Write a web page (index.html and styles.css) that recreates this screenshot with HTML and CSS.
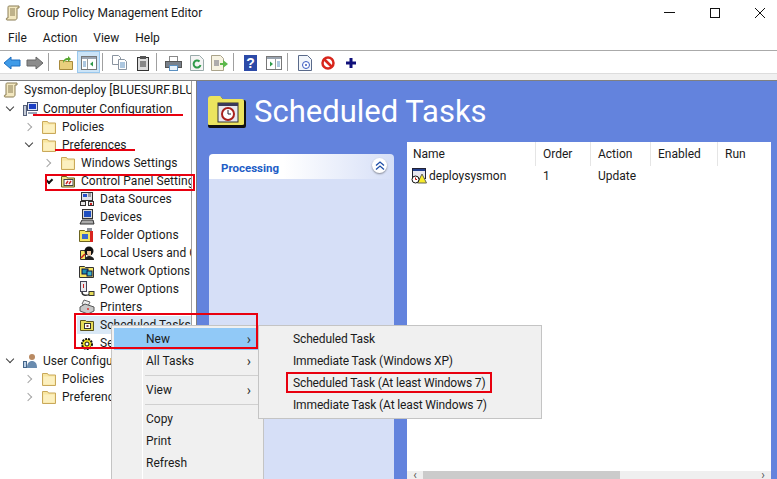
FILE: index.html
```html
<!DOCTYPE html>
<html lang="en">
<head>
    <meta charset="UTF-8">
    <meta name="viewport" content="width=device-width, initial-scale=1.0">
    <title>Group Policy Management Editor</title>
    <link rel="stylesheet" href="styles.css">
</head>
<body>

    <!-- Shared icons -->
    <svg class="icon-defs" width="0" height="0">
        <defs>
            <symbol id="i-scroll" viewBox="0 0 16 16">
                <path d="M4 1h10v2h-2v10c0 1-1 2-2 2H2c-1 0-1-2 0-2h1V3c0-1 0-2 1-2z" fill="#f3e8c0" stroke="#8a7d55"/>
                <path d="M5 4h5M5 6h5M5 8h5M5 10h5" stroke="#8a7d55"/>
            </symbol>
            <symbol id="i-folder" viewBox="0 0 16 16">
                <path d="M1.500 2.500h5l1 1.500h7v10.500h-13z" fill="#f8e6a0" stroke="#c9a85a"/>
                <path d="M2.500 5.500h11v8h-11z" fill="#fcf0c0"/>
            </symbol>
            <symbol id="i-computer" viewBox="0 0 16 16">
                <rect x="5.500" y="1.500" width="10" height="8" fill="#dfe6f5" stroke="#44506e"/>
                <rect x="7" y="3" width="7" height="5" fill="#1c3fc4"/>
                <rect x="1.500" y="4.500" width="3" height="10" fill="#c5cbd6" stroke="#55607a"/>
                <path d="M6 11h9v2H6z" fill="#9aa5b8"/>
            </symbol>
            <symbol id="i-users" viewBox="0 0 16 16">
                <circle cx="10" cy="4" r="3" fill="#b98a62"/>
                <path d="M5 15c0-5 2-7 5-7s5 2 5 7z" fill="#6a8caf"/>
                <rect x="1.500" y="8.500" width="3" height="6" fill="#bcd0e6" stroke="#44668a"/>
            </symbol>
            <symbol id="i-control" viewBox="0 0 16 16">
                <path d="M1.500 3.500h5l1 1.500h7v9h-13z" fill="#f0e68c" stroke="#6b6320"/>
                <rect x="4" y="6.500" width="9" height="6" fill="#fff" stroke="#444"/>
                <path d="M6 11l2-3M9 11l2-3" stroke="#c22" stroke-width="1.500"/>
            </symbol>
            <symbol id="i-data" viewBox="0 0 16 16">
                <rect x="2.500" y="1.500" width="11" height="8" fill="#dfe3ea" stroke="#333"/>
                <rect x="4" y="3" width="4" height="3" fill="#2650c8"/>
                <path d="M9 3h3M9 5h3" stroke="#555"/>
                <rect x="1.500" y="10.500" width="5" height="4" fill="#e8e8e8" stroke="#333"/>
                <rect x="9.500" y="10.500" width="5" height="4" fill="#e8e8e8" stroke="#333"/>
                <rect x="11" y="12" width="2" height="2" fill="#c22"/>
            </symbol>
            <symbol id="i-device" viewBox="0 0 16 16">
                <rect x="3.500" y="0.500" width="10" height="9" fill="#d8d8d8" stroke="#333"/>
                <rect x="5" y="2" width="7" height="6" fill="#1f4fc0"/>
                <path d="M1 15l2-4h11l1 4z" fill="#aaa" stroke="#333"/>
            </symbol>
            <symbol id="i-folderopt" viewBox="0 0 16 16">
                <path d="M0.500 3.500h5l1 1h7v10h-13z" fill="#f5e663" stroke="#6b6320"/>
                <rect x="3" y="7" width="6" height="5" fill="#3a6ad0"/>
                <path d="M8 1l5 0 0 3-5 0z" fill="#8a8f99"/>
                <rect x="11" y="4" width="3" height="11" fill="#d8251f"/>
            </symbol>
            <symbol id="i-local" viewBox="0 0 16 16">
                <path d="M1.500 5.500h5v9h-5z" fill="#f5e663" stroke="#333"/>
                <circle cx="10" cy="6" r="4.500" fill="#111"/>
                <path d="M8 6h4v4l-2 1-2-2z" fill="#f0c8a0"/>
                <path d="M6 15c0-3 2-4 4-4s5 1 5 4z" fill="#222"/>
                <path d="M2 13l4-4" stroke="#c22" stroke-width="1.500"/>
            </symbol>
            <symbol id="i-network" viewBox="0 0 16 16">
                <path d="M0.500 3.500h5l1 1h8v10h-14z" fill="#f5e663" stroke="#333"/>
                <rect x="3" y="6" width="6" height="5" fill="#1f8fb0" stroke="#114"/>
                <rect x="8" y="8" width="5" height="5" fill="#39b6c8" stroke="#114"/>
            </symbol>
            <symbol id="i-power" viewBox="0 0 16 16">
                <rect x="1.500" y="0.500" width="6" height="10" fill="#e8e8ec" stroke="#445"/>
                <path d="M4.500 3v4" stroke="#c22"/>
                <path d="M3 11c0 4 5 4 8 2" fill="none" stroke="#333" stroke-width="1.500"/>
                <rect x="10" y="10.500" width="5" height="4" fill="#e6dc5a" stroke="#333"/>
            </symbol>
            <symbol id="i-printer" viewBox="0 0 16 16">
                <path d="M5 1l6 2-2 4-6-2z" fill="#eee" stroke="#666"/>
                <path d="M1 8l5-3 9 3v4l-6 3-8-3z" fill="#c8c8c8" stroke="#555"/>
                <circle cx="9" cy="10" r="1" fill="#d33"/>
            </symbol>
            <symbol id="i-sched" viewBox="0 0 16 16">
                <path d="M1.500 3.500h5l1 1h7v9h-13z" fill="#e6dc5a" stroke="#5a5420"/>
                <rect x="5.500" y="6.500" width="6" height="5" fill="#fff" stroke="#333"/>
                <rect x="7.500" y="8" width="2" height="2" fill="#844"/>
            </symbol>
            <symbol id="i-gear" viewBox="0 0 16 16">
                <circle cx="8" cy="9" r="5" fill="#f0e020" stroke="#111" stroke-width="2" stroke-dasharray="2 1"/>
                <circle cx="8" cy="9" r="2" fill="#fff" stroke="#111"/>
            </symbol>
            <symbol id="i-task" viewBox="0 0 16 16">
                <rect x="1.500" y="0.500" width="13" height="10" fill="#e8e8f0" stroke="#223"/>
                <rect x="2" y="1" width="12" height="2" fill="#24408e"/>
                <path d="M11 6l4.500 9h-9z" fill="#f8ec2c" stroke="#665"/>
                <circle cx="4.500" cy="11.500" r="3.500" fill="#fff" stroke="#111"/>
                <path d="M4.500 9.500v2h1.500" fill="none" stroke="#b11"/>
            </symbol>
        </defs>
    </svg>

    <div class="window">
        <!-- Title bar -->
        <div class="title-bar">
            <svg class="ico"><use href="#i-scroll"/></svg>
            <span class="title-text">Group Policy Management Editor</span>
            <div class="win-controls">
                <span class="win-btn"><svg width="12" height="12"><path d="M0 5.500h11" stroke="#111"/></svg></span>
                <span class="win-btn"><svg width="12" height="12"><rect x="1.500" y="1.500" width="9" height="9" fill="none" stroke="#111"/></svg></span>
                <span class="win-btn"><svg width="12" height="12"><path d="M1 1l10 10M11 1L1 11" stroke="#111"/></svg></span>
            </div>
        </div>

        <!-- Menu bar -->
        <div class="menu-bar">
            <span>File</span>
            <span>Action</span>
            <span>View</span>
            <span>Help</span>
        </div>

        <!-- Toolbar -->
        <div class="toolbar">
            <span class="tool"><svg width="18" height="16"><path d="M1 8l7-6v3h9v6H8v3z" fill="#3f9be8" stroke="#1f6fc0"/></svg></span>
            <span class="tool"><svg width="18" height="16"><path d="M17 8l-7-6v3H1v6h9v3z" fill="#8c8c8c" stroke="#666"/></svg></span>
            <span class="tool-sep"></span>
            <span class="tool"><svg width="16" height="16"><path d="M1.500 5.500h5l1 1h7v8h-13z" fill="#e9cf7d" stroke="#a88a3c"/><path d="M5 8c0-3 2-5 5-5V1l3 3-3 3V5C8 5 6 6 5 8z" fill="#58a832"/></svg></span>
            <span class="tool tool-active"><svg width="16" height="14"><rect x="0.500" y="0.500" width="15" height="13" fill="#fff" stroke="#777"/><path d="M1 1h14v2H1z" fill="#9aa4b0"/><path d="M6.500 3v10" stroke="#999"/><path d="M2 6h3M2 8h3M2 10h3" stroke="#5a8fc0"/><path d="M12 5.500v5L9 8z" fill="#2f9a4a"/></svg></span>
            <span class="tool-sep"></span>
            <span class="tool"><svg width="17" height="17"><path d="M1.500 1.500h6l2 2v7h-8z" fill="#fff" stroke="#8a94a0"/><path d="M7.500 5.500h6l2 2v8h-8z" fill="#fff" stroke="#8a94a0"/><path d="M9 9h5M9 11h5M9 13h5" stroke="#5a8fc0"/></svg></span>
            <span class="tool"><svg width="14" height="16"><rect x="1.500" y="2.500" width="11" height="13" fill="#ddd" stroke="#333"/><rect x="4" y="1" width="6" height="3" fill="#555"/><path d="M4 7h6M4 9h6M4 11h6" stroke="#333"/></svg></span>
            <span class="tool-sep"></span>
            <span class="tool"><svg width="17" height="16"><rect x="4.500" y="1.500" width="8" height="5" fill="#fff" stroke="#888"/><rect x="0.500" y="6.500" width="16" height="6" fill="#78808a" stroke="#555"/><rect x="4.500" y="10.500" width="8" height="5" fill="#e8f2fb" stroke="#5a8fc0"/></svg></span>
            <span class="tool"><svg width="14" height="16"><path d="M0.500 0.500h9l4 4v11H0.500z" fill="#f4f4f4" stroke="#9aa"/><path d="M10.500 10a3.500 3.500 0 1 1-1-3.500" fill="none" stroke="#2f9a4a" stroke-width="2"/></svg></span>
            <span class="tool"><svg width="17" height="16"><path d="M0.500 0.500h9l3 3v12h-12z" fill="#f7f3e2" stroke="#aaa38a"/><path d="M3 6h5M3 8h5M3 10h5" stroke="#667"/><path d="M9 8h3V5l5 4-5 4v-3H9z" fill="#5cb84a"/></svg></span>
            <span class="tool-sep"></span>
            <span class="tool"><svg width="13" height="16"><rect width="13" height="16" fill="#2c4aa8"/><text x="6.500" y="13" text-anchor="middle" font-family="Liberation Sans" font-size="14" font-weight="bold" fill="#fff">?</text></svg></span>
            <span class="tool"><svg width="16" height="14"><rect x="0.500" y="0.500" width="15" height="13" fill="#fff" stroke="#777"/><path d="M1 1h14v2H1z" fill="#9aa4b0"/><path d="M9.500 3v10" stroke="#999"/><path d="M11 6h3M11 8h3M11 10h3" stroke="#5a8fc0"/><path d="M4 5.500v5L7 8z" fill="#2f9a4a"/></svg></span>
            <span class="tool-sep"></span>
            <span class="tool"><svg width="14" height="16"><path d="M0.500 0.500h9l4 4v11H0.500z" fill="#f2f6fb" stroke="#5a6a8a"/><circle cx="8" cy="10" r="3.500" fill="#fff" stroke="#3a5ac0"/><circle cx="8" cy="10" r="1" fill="#3a5ac0"/></svg></span>
            <span class="tool"><svg width="14" height="14"><circle cx="7" cy="7" r="5.500" fill="#fff" stroke="#d8261c" stroke-width="2.500"/><path d="M3 3l8 8" stroke="#d8261c" stroke-width="2.500"/></svg></span>
            <span class="tool"><svg width="10" height="10"><path d="M3.500 0h3v3.500H10v3H6.500V10h-3V6.500H0v-3h3.500z" fill="#10107a"/></svg></span>
        </div>
        <div class="toolbar-band"></div>

        <!-- Main area -->
        <div class="main">
            <div class="tree">
                <div class="tree-row root"><svg class="ico"><use href="#i-scroll"/></svg><span>Sysmon-deploy [BLUESURF.BLUESURF.LOCAL] Policy</span></div>
                <div class="tree-row lvl-0"><span class="twist open"></span><svg class="ico"><use href="#i-computer"/></svg><span>Computer Configuration</span></div>
                <div class="tree-row lvl-1"><span class="twist"></span><svg class="ico"><use href="#i-folder"/></svg><span>Policies</span></div>
                <div class="tree-row lvl-1"><span class="twist open"></span><svg class="ico"><use href="#i-folder"/></svg><span>Preferences</span></div>
                <div class="tree-row lvl-2"><span class="twist"></span><svg class="ico"><use href="#i-folder"/></svg><span>Windows Settings</span></div>
                <div class="tree-row lvl-2"><span class="twist open dark"></span><svg class="ico"><use href="#i-control"/></svg><span>Control Panel Settings</span></div>
                <div class="tree-row lvl-3"><span class="twist none"></span><svg class="ico"><use href="#i-data"/></svg><span>Data Sources</span></div>
                <div class="tree-row lvl-3"><span class="twist none"></span><svg class="ico"><use href="#i-device"/></svg><span>Devices</span></div>
                <div class="tree-row lvl-3"><span class="twist none"></span><svg class="ico"><use href="#i-folderopt"/></svg><span>Folder Options</span></div>
                <div class="tree-row lvl-3"><span class="twist none"></span><svg class="ico"><use href="#i-local"/></svg><span>Local Users and Groups</span></div>
                <div class="tree-row lvl-3"><span class="twist none"></span><svg class="ico"><use href="#i-network"/></svg><span>Network Options</span></div>
                <div class="tree-row lvl-3"><span class="twist none"></span><svg class="ico"><use href="#i-power"/></svg><span>Power Options</span></div>
                <div class="tree-row lvl-3"><span class="twist none"></span><svg class="ico"><use href="#i-printer"/></svg><span>Printers</span></div>
                <div class="tree-row lvl-3 selected"><span class="twist none"></span><svg class="ico"><use href="#i-sched"/></svg><span>Scheduled Tasks</span></div>
                <div class="tree-row lvl-3"><span class="twist none"></span><svg class="ico"><use href="#i-gear"/></svg><span>Services</span></div>
                <div class="tree-row lvl-0"><span class="twist open"></span><svg class="ico"><use href="#i-users"/></svg><span>User Configuration</span></div>
                <div class="tree-row lvl-1"><span class="twist"></span><svg class="ico"><use href="#i-folder"/></svg><span>Policies</span></div>
                <div class="tree-row lvl-1"><span class="twist"></span><svg class="ico"><use href="#i-folder"/></svg><span>Preferences</span></div>
            </div>

            <div class="splitter"></div>

            <div class="content">
                <div class="content-head">
                    <svg class="head-icon" width="40" height="34" viewBox="0 0 40 34">
                        <path d="M2 5q0-3 3-3h9l3 3h20q2 0 2 2v24q0 2-2 2H3q-2 0-2-2z" fill="#111"/>
                        <path d="M1 4q0-3 3-3h9l3 3h19q2 0 2 2v23q0 1-2 1H2q-1 0-1-1z" fill="#ece45f"/>
                        <rect x="11" y="8" width="20" height="19" fill="#e8e8f0" stroke="#333"/>
                        <rect x="11" y="8" width="20" height="3" fill="#3a3a5a"/>
                        <circle cx="21" cy="19" r="6" fill="#fff" stroke="#a8201c" stroke-width="2"/>
                        <path d="M21 15v4h3" fill="none" stroke="#223"/>
                    </svg>
                    <h1>Scheduled Tasks</h1>
                </div>
                <div class="content-body">
                    <div class="task-pane">
                        <div class="task-head">
                            <span>Processing</span>
                            <span class="collapse"><svg width="10" height="10"><path d="M1 4.500l4-3.500 4 3.500M1 8.500l4-3.500 4 3.500" fill="none" stroke="#1f4fa8" stroke-width="1.300"/></svg></span>
                        </div>
                        <div class="task-body"></div>
                    </div>
                    <div class="list">
                        <div class="list-head">
                            <span class="col-name">Name</span>
                            <span class="col-order">Order</span>
                            <span class="col-action">Action</span>
                            <span class="col-enabled">Enabled</span>
                            <span class="col-run">Run</span>
                        </div>
                        <div class="list-row">
                            <span class="col-name name-cell"><svg class="ico"><use href="#i-task"/></svg>deploysysmon</span>
                            <span class="col-order">1</span>
                            <span class="col-action">Update</span>
                        </div>
                        <div class="list-scroll">
                            <span class="scroll-arrow">&#8249;</span>
                            <span class="scroll-thumb"></span>
                            <span class="scroll-arrow right">&#8250;</span>
                        </div>
                    </div>
                </div>
            </div>
        </div>
    </div>

    <!-- Context menu -->
    <div class="ctx-menu">
        <div class="ctx-item hot"><span>New</span><span class="arrow">&#8250;</span></div>
        <div class="ctx-item"><span>All Tasks</span><span class="arrow">&#8250;</span></div>
        <div class="ctx-sep"></div>
        <div class="ctx-item"><span>View</span><span class="arrow">&#8250;</span></div>
        <div class="ctx-sep"></div>
        <div class="ctx-item"><span>Copy</span></div>
        <div class="ctx-item"><span>Print</span></div>
        <div class="ctx-item"><span>Refresh</span></div>
    </div>

    <!-- Submenu -->
    <div class="sub-menu">
        <div class="ctx-item"><span>Scheduled Task</span></div>
        <div class="ctx-item"><span>Immediate Task (Windows XP)</span></div>
        <div class="ctx-item"><span>Scheduled Task (At least Windows 7)</span></div>
        <div class="ctx-item"><span>Immediate Task (At least Windows 7)</span></div>
    </div>

    <!-- Red annotations drawn on top of the screenshot -->
    <div class="mark-line mark-computer"></div>
    <div class="mark-line mark-prefs"></div>
    <div class="mark-box mark-control"></div>
    <div class="mark-box mark-new"></div>
    <div class="mark-box mark-task"></div>

</body>
</html>
```

FILE: styles.css
```css
/* General page */
html, body {
    margin: 0;
    height: 100%;
    overflow: hidden;
}

body {
    position: relative;
    background-color: #fff;
    color: #1a1a1a;
    font-family: "Roboto", "Liberation Sans", sans-serif;
    font-size: 12px;
}

.icon-defs {
    position: absolute;
}

.window {
    display: flex;
    flex-direction: column;
    width: 777px;
    height: 479px;
}

.ico {
    width: 16px;
    height: 16px;
    flex: none;
}

/* Title bar */
.title-bar {
    display: flex;
    align-items: center;
    height: 26px;
    padding-left: 5px;
}

.title-text {
    margin: 0 0 1px 6px;
}

.win-controls {
    display: flex;
    margin-left: auto;
    margin-right: -5px;
}

.win-btn {
    display: flex;
    align-items: center;
    justify-content: center;
    width: 45px;
    height: 26px;
}

/* Menu bar */
.menu-bar {
    display: flex;
    align-items: center;
    gap: 16px;
    height: 24px;
    padding-left: 8px;
    border-bottom: 1px solid #aaa;
}

/* Toolbar */
.toolbar {
    display: flex;
    align-items: center;
    height: 22px;
    border-bottom: 1px solid #ddd;
}

.tool {
    display: flex;
    align-items: center;
    justify-content: center;
    width: 23px;
    height: 22px;
    box-sizing: border-box;
}

.tool svg {
    margin-top: 1px;
}

.tool-active {
    background-color: #cce4f7;
    border: 1px solid #99c8ee;
}

.tool-sep {
    width: 1px;
    height: 18px;
    margin: 0 5px 0 2px;
    background-color: #a0a0a0;
}

.toolbar-band {
    height: 6px;
    background-color: #f0f0f0;
    border-bottom: 1px solid #808080;
}

/* Main area */
.main {
    display: flex;
    flex: 1;
    min-height: 0;
}

.tree {
    width: 191px;
    overflow: hidden;
    flex: none;
}

.tree-row {
    display: flex;
    align-items: center;
    height: 18px;
    white-space: nowrap;
    letter-spacing: 0.05px;
}

.tree-row > span:last-child {
    margin-left: 5px;
}

.root {
    padding-left: 3px;
    margin-bottom: 1px;
}

.lvl-0 { padding-left: 2px; }
.lvl-1 { padding-left: 21px; }
.lvl-2 { padding-left: 40px; }
.lvl-3 { padding-left: 59px; }

.selected {
    background: linear-gradient(to right, transparent 77px, #d9e8f6 77px);
}

/* Tree expander arrows */
.twist {
    position: relative;
    width: 16px;
    height: 16px;
    margin-right: 4px;
    flex: none;
}

.twist::before {
    content: "";
    position: absolute;
    left: 4px;
    top: 5px;
    width: 5px;
    height: 5px;
    border-top: 1.500px solid #a6a6a6;
    border-right: 1.500px solid #a6a6a6;
    transform: rotate(45deg);
}

.twist.open::before {
    left: 5px;
    top: 3px;
    border-color: #404040;
    transform: rotate(135deg);
}

.twist.dark::before {
    left: 6px;
    top: 4px;
    border-color: #111;
    border-width: 2px;
    width: 4px;
    height: 4px;
}

.twist.none::before {
    display: none;
}

/* Splitter between tree and content */
.splitter {
    width: 4px;
    flex: none;
    background-color: #fff;
    border-left: 1px solid #a0a0a0;
}

/* Content pane */
.content {
    display: flex;
    flex-direction: column;
    flex: 1;
    min-width: 0;
    background-color: #6383dd;
    border-left: 1px solid #808080;
}

.content-head {
    display: flex;
    align-items: center;
    height: 61px;
    padding-left: 10px;
}

.content-head h1 {
    margin: 0 0 0 7px;
    color: #fff;
    font-size: 31px;
    font-weight: 400;
}

.content-body {
    display: flex;
    flex: 1;
    min-height: 0;
    padding-right: 6px;
}

/* Processing pane */
.task-pane {
    display: flex;
    flex-direction: column;
    width: 185px;
    margin: 12px 13px 0 12px;
    flex: none;
}

.task-head {
    display: flex;
    align-items: center;
    justify-content: space-between;
    height: 25px;
    padding: 2px 7px 0 12px;
    box-sizing: border-box;
    border-radius: 4px 4px 0 0;
    background: linear-gradient(to right, #fff 40%, #d6dff7);
    color: #215dc6;
    font-weight: 700;
    font-size: 11.5px;
}

.collapse {
    display: flex;
    align-items: center;
    justify-content: center;
    width: 15px;
    height: 15px;
    margin-top: -4px;
    border-radius: 50%;
    background-color: #fff;
    box-shadow: 0 1px 2px rgba(0, 0, 0, 0.4);
}

.task-body {
    flex: 1;
    background-color: #d6dff7;
}

/* List */
.list {
    display: flex;
    flex-direction: column;
    flex: 1;
    background-color: #fff;
}

.list-head,
.list-row {
    display: flex;
    align-items: center;
    white-space: nowrap;
}

.list-head {
    height: 24px;
}

.list-row {
    height: 20px;
}

.list-head span {
    height: 24px;
    line-height: 24px;
    border-right: 1px solid #e5e5e5;
    box-sizing: border-box;
}

.col-name { width: 129px; padding-left: 6px; box-sizing: border-box; }
.col-order { width: 55px; padding-left: 7px; box-sizing: border-box; }
.col-action { width: 60px; padding-left: 7px; box-sizing: border-box; }
.col-enabled { width: 67px; padding-left: 7px; box-sizing: border-box; }
.col-run { width: 53px; padding-left: 7px; box-sizing: border-box; }

.list-head .col-run {
    border-right: none;
}

.name-cell {
    display: flex;
    align-items: center;
    gap: 2px;
    padding-left: 4px;
}

.list-scroll {
    display: flex;
    align-items: center;
    height: 8px;
    margin-top: auto;
    background-color: #efefef;
    overflow: hidden;
}

.scroll-arrow {
    width: 16px;
    color: #555;
    font-size: 12px;
    line-height: 8px;
    text-align: center;
    flex: none;
}

.scroll-arrow.right {
    margin-left: auto;
}

.scroll-thumb {
    width: 197px;
    height: 8px;
    background-color: #cbcbcb;
}

/* Context menus */
.ctx-menu,
.sub-menu {
    position: absolute;
    box-sizing: border-box;
    background-color: #f0f0f0;
    border: 1px solid #c4c4c4;
}

.ctx-menu {
    left: 111px;
    top: 325px;
    width: 153px;
    height: 160px;
    padding: 2px;
    background: linear-gradient(to right, #f0f0f0 30px, #fff 30px, #fff 31px, #f0f0f0 31px);
}

.sub-menu {
    left: 258px;
    top: 325px;
    width: 284px;
    height: 94px;
    padding: 2px;
    letter-spacing: -0.14px;
}

.ctx-item {
    display: flex;
    align-items: center;
    justify-content: space-between;
    height: 22px;
    padding: 0 10px 1px 32px;
    box-sizing: border-box;
}

.ctx-item.hot {
    background-color: #91c9f7;
}

.arrow {
    font-size: 14px;
    color: #333;
}

.ctx-sep {
    height: 1px;
    margin: 3px 0 3px 31px;
    background-color: #d0d0d0;
}

/* Red annotations */
.mark-line {
    position: absolute;
    height: 2px;
    background-color: #e8000f;
}

.mark-computer {
    left: 33px;
    top: 114px;
    width: 150px;
}

.mark-prefs {
    left: 55px;
    top: 149px;
    width: 80px;
}

.mark-box {
    position: absolute;
    box-sizing: border-box;
    border: 2px solid #e8000f;
}

.mark-control {
    left: 45px;
    top: 174px;
    width: 150px;
    height: 17px;
}

.mark-new {
    left: 74px;
    top: 313px;
    width: 184px;
    height: 36px;
}

.mark-task {
    left: 286px;
    top: 372px;
    width: 206px;
    height: 21px;
}
```
